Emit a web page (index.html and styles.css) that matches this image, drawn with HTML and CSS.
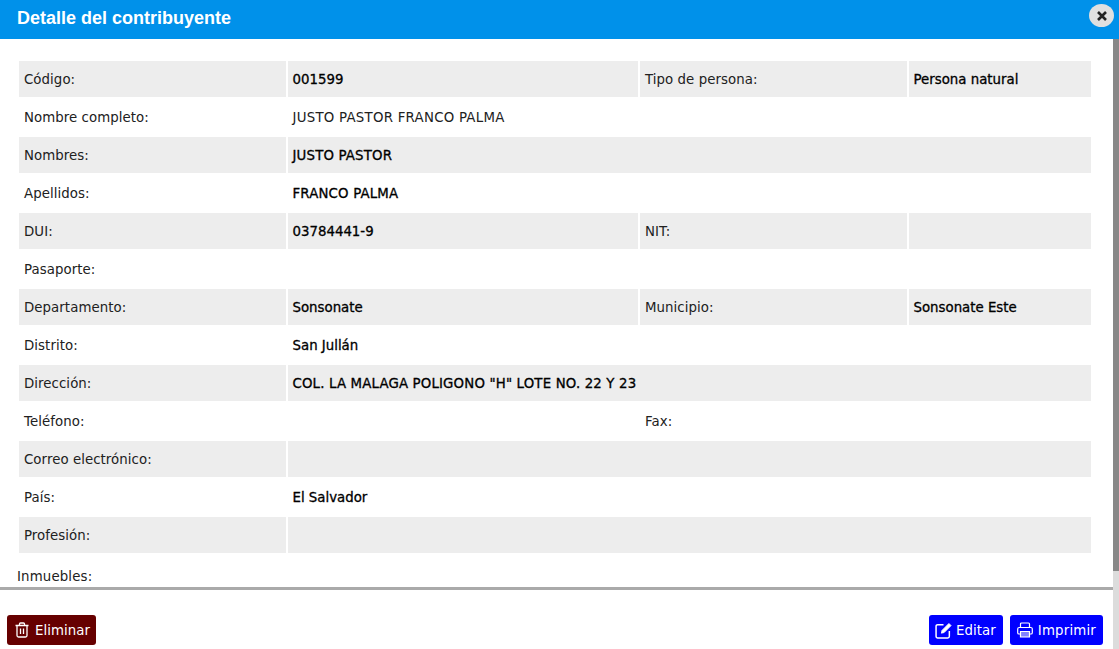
FILE: index.html
```html
<!DOCTYPE html>
<html lang="en">

<head>
    <meta charset="UTF-8">
    <meta name="viewport" content="width=device-width, initial-scale=1.0">
    <title>Detalle del contribuyente</title>
    <link rel="stylesheet" href="styles.css">
</head>

<body>
    <div class="modal">
        <div class="modal-header">
            <h2>Detalle del contribuyente</h2>
            <button class="close-btn" type="button">
                <svg width="12" height="12" viewBox="0 0 12 12"><path d="M2 2l8 8M10 2l-8 8" stroke="#222" stroke-width="2.6" fill="none"/></svg>
            </button>
        </div>

        <div class="modal-body">
            <div class="content">
                <table class="detail-table">
                    <colgroup>
                        <col class="col-a">
                        <col class="col-b">
                        <col class="col-c">
                        <col class="col-d">
                    </colgroup>
                    <tr>
                        <td>Código:</td>
                        <td class="value">001599</td>
                        <td>Tipo de persona:</td>
                        <td class="value">Persona natural</td>
                    </tr>
                    <tr>
                        <td>Nombre completo:</td>
                        <td class="full-name" colspan="3">JUSTO PASTOR FRANCO PALMA</td>
                    </tr>
                    <tr>
                        <td>Nombres:</td>
                        <td class="value caps" colspan="3">JUSTO PASTOR</td>
                    </tr>
                    <tr>
                        <td>Apellidos:</td>
                        <td class="value caps" colspan="3">FRANCO PALMA</td>
                    </tr>
                    <tr>
                        <td>DUI:</td>
                        <td class="value">03784441-9</td>
                        <td>NIT:</td>
                        <td class="value"></td>
                    </tr>
                    <tr>
                        <td>Pasaporte:</td>
                        <td class="value" colspan="3"></td>
                    </tr>
                    <tr>
                        <td>Departamento:</td>
                        <td class="value">Sonsonate</td>
                        <td>Municipio:</td>
                        <td class="value">Sonsonate Este</td>
                    </tr>
                    <tr>
                        <td>Distrito:</td>
                        <td class="value" colspan="3">San Jullán</td>
                    </tr>
                    <tr>
                        <td>Dirección:</td>
                        <td class="value caps" colspan="3">COL. LA MALAGA POLIGONO "H" LOTE NO. 22 Y 23</td>
                    </tr>
                    <tr>
                        <td>Teléfono:</td>
                        <td class="value"></td>
                        <td>Fax:</td>
                        <td class="value"></td>
                    </tr>
                    <tr>
                        <td>Correo electrónico:</td>
                        <td class="value" colspan="3"></td>
                    </tr>
                    <tr>
                        <td>País:</td>
                        <td class="value" colspan="3">El Salvador</td>
                    </tr>
                    <tr>
                        <td>Profesión:</td>
                        <td class="value" colspan="3"></td>
                    </tr>
                </table>
                <div class="section-label">Inmuebles:</div>
            </div>

            <div class="modal-footer">
                <button class="btn btn-danger" type="button">
                    <svg width="16" height="16" viewBox="0 0 16 16" fill="none" stroke="#fff" stroke-width="1.3"><path d="M1.500 3.500h13M5.500 3.500V2a1 1 0 0 1 1-1h3a1 1 0 0 1 1 1v1.500M3 3.500v10a1.500 1.500 0 0 0 1.500 1.500h7a1.500 1.500 0 0 0 1.500-1.500v-10M6.500 6.500v5.500M9.500 6.500v5.500"/></svg>
                    Eliminar
                </button>
                <div class="footer-right">
                    <button class="btn btn-primary btn-edit" type="button">
                        <svg width="17" height="17" viewBox="0 0 16 16" fill="none" stroke="#fff" stroke-width="1.4"><path d="M13.500 8.500v5a1.500 1.500 0 0 1-1.500 1.500h-9.500a1.500 1.500 0 0 1-1.500-1.500v-9.500a1.500 1.500 0 0 1 1.500-1.500h5.500"/><path d="M6 10.500l.6-2.600 6.500-6.500 2 2-6.500 6.500z" fill="#fff" stroke-width="0.8"/></svg>
                        Editar
                    </button>
                    <button class="btn btn-primary btn-print" type="button">
                        <svg width="16" height="16" viewBox="0 0 16 16" fill="none" stroke="#fff" stroke-width="1.2"><path d="M3.500 5.500v-3.500a1 1 0 0 1 1-1h7a1 1 0 0 1 1 1v3.500"/><path d="M3.500 12h-1.500a1.300 1.300 0 0 1-1.300-1.300v-3.700a1.500 1.500 0 0 1 1.500-1.500h11.600a1.500 1.500 0 0 1 1.500 1.500v3.700a1.300 1.300 0 0 1-1.300 1.300h-1.500"/><path d="M3.500 9.500h9v5.500h-9z" fill="#8080ff"/></svg>
                        Imprimir
                    </button>
                </div>
            </div>
        </div>
    </div>
</body>

</html>
```

FILE: styles.css
```css
html,
body {
    margin: 0;
    height: 100%;
    overflow: hidden;
}

body {
    font-family: "DejaVu Sans", Verdana, sans-serif;
    font-size: 13.33px;
    color: #212121;
    background-color: #fff;
}

.modal {
    height: 649px;
    display: flex;
    flex-direction: column;
}

.modal-header {
    height: 39px;
    flex-shrink: 0;
    background-color: #0091ea;
    display: flex;
    justify-content: space-between;
    padding-left: 17px;
    padding-right: 5px;
    box-sizing: border-box;
}

.modal-header h2 {
    margin: 0;
    font-family: "Liberation Sans", Arial, sans-serif;
    font-size: 18px;
    font-weight: bold;
    line-height: 36px;
    color: #fff;
}

.close-btn {
    width: 25px;
    height: 23px;
    margin-top: 4px;
    padding: 0;
    border: none;
    border-radius: 50%;
    background-color: #e0e0e0;
    display: flex;
    align-items: center;
    justify-content: center;
}

.modal-body {
    flex: 1;
    display: flex;
    flex-direction: column;
    min-height: 0;
    border-right: 6px solid #dcdcdc;
    position: relative;
}

/* scrollbar thumb */
.modal-body::after {
    content: "";
    position: absolute;
    top: 0;
    right: -6px;
    width: 6px;
    height: 532px;
    background-color: #888;
}

.content {
    height: 548px;
    overflow: hidden;
    border-bottom: 3px solid #aaa;
    padding-left: 17px;
}

.detail-table {
    width: 1076px;
    margin-top: 20px;
    border-collapse: separate;
    border-spacing: 2px;
    table-layout: fixed;
}

.col-a {
    width: 267px;
}

.col-b {
    width: 350px;
}

.col-c {
    width: 267px;
}

.col-d {
    width: 182px;
}

.detail-table td {
    height: 36px;
    padding: 0 5px;
    box-sizing: border-box;
    white-space: nowrap;
    letter-spacing: 0.06px;
}

.detail-table tr:nth-child(odd) td {
    background-color: #ededed;
}

.detail-table .value {
    padding-left: 4.5px;
    color: #000;
    letter-spacing: 0;
    -webkit-text-stroke: 0.3px #000;
}

.detail-table .caps {
    letter-spacing: 0.16px;
}

.detail-table .full-name {
    padding-left: 4.5px;
    letter-spacing: 0.25px;
}

.section-label {
    margin-top: 14px;
    letter-spacing: 0.15px;
}

.modal-footer {
    flex: 1;
    display: flex;
    justify-content: space-between;
    align-items: flex-start;
    padding: 25px 10px 0 7px;
}

.footer-right {
    display: flex;
    gap: 7px;
}

.btn {
    height: 30px;
    padding: 0 7px;
    border: none;
    border-radius: 3px;
    color: #fff;
    font-family: inherit;
    font-size: 13.33px;
    letter-spacing: 0.05px;
    display: flex;
    align-items: center;
    gap: 5px;
}

.btn-danger {
    padding-right: 6px;
    background-color: #660000;
}

.btn-primary {
    background-color: #0000ff;
}

.btn-edit {
    padding-left: 6px;
    gap: 4px;
}

.btn-print {
    letter-spacing: 0.18px;
}
```
